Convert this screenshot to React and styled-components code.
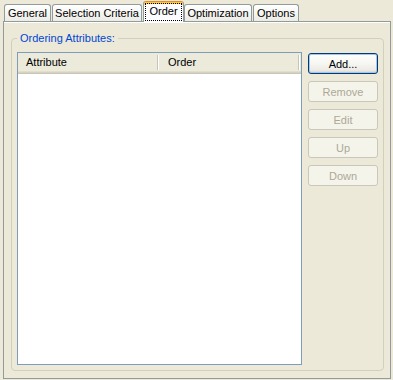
import React from "react";
import styled, { createGlobalStyle } from "styled-components";

const GlobalStyle = createGlobalStyle`
  body {
    margin: 0;
    background: #ece9d8;
    font-family: "Liberation Sans", Arial, sans-serif;
    font-size: 11px;
    color: #000;
  }
`;

const Window = styled.div`
  width: 393px;
  height: 380px;
  box-sizing: border-box;
  padding: 0 2px 1px 3px;
  display: flex;
  flex-direction: column;
`;

const TabStrip = styled.div`
  height: 21px;
  display: flex;
  align-items: flex-end;
  gap: 1px;
  padding-left: 1px;
  position: relative;
  z-index: 1;
`;

const Tab = styled.div`
  width: ${(p) => p.$w}px;
  height: 17px;
  box-sizing: border-box;
  border: 1px solid #919b9c;
  border-bottom: none;
  border-radius: 3px 3px 0 0;
  background: linear-gradient(#ffffff, #f3f3ef 60%, #ecebe6);
  text-align: center;
  line-height: 16px;
  white-space: nowrap;
`;

const ActiveTab = styled.div`
  width: ${(p) => p.$w}px;
  height: 21px;
  margin-bottom: -1px;
  margin-right: -1px;
  box-sizing: border-box;
  border: 1px solid #919b9c;
  border-top: 1px solid #e68b2c;
  border-bottom: none;
  border-radius: 3px 3px 0 0;
  box-shadow: inset 0 2px #ffc83c;
  background: #fcfcfe;
  display: flex;
  justify-content: center;
`;

const FocusLabel = styled.span`
  margin-top: 1px;
  height: 18px;
  box-sizing: border-box;
  padding: 0 3px;
  border: 1px dotted #000;
  line-height: 15px;
`;

const Panel = styled.div`
  flex: 1;
  display: flex;
  border: 1px solid #919b9c;
  box-shadow: inset 0 1px #ffffff;
  padding: 10px 6px 7px 7px;
`;

const Group = styled.fieldset`
  flex: 1;
  min-width: 0;
  margin: 0;
  border: 1px solid #d0d0bf;
  border-radius: 4px;
  padding: 7px 5px 5px 5px;
  display: flex;
  gap: 6px;
`;

const Legend = styled.legend`
  color: #0046d5;
  padding: 0 3px;
  line-height: 13px;
`;

const List = styled.div`
  width: 285px;
  box-sizing: border-box;
  border: 1px solid #7f9db9;
  background: #fff;
  display: flex;
  flex-direction: column;
`;

const Header = styled.div`
  height: 21px;
  display: grid;
  grid-template-columns: 141px 142px;
  background: linear-gradient(
    #ebeadb 0 18px,
    #e2decd 18px 19px,
    #d6d2c2 19px 20px,
    #cbc7b8 20px 21px
  );
`;

const HeaderCell = styled.div`
  position: relative;
  padding-left: ${(p) => p.$pad}px;
  line-height: 18px;

  &::after {
    content: "";
    position: absolute;
    right: ${(p) => p.$edge}px;
    top: 2px;
    height: 15px;
    width: 0;
    border-left: 1px solid #c7c5b2;
    border-right: 1px solid #ffffff;
  }
`;

const ButtonColumn = styled.div`
  display: flex;
  flex-direction: column;
  gap: 7px;
  padding-top: 1px;
`;

const Button = styled.button`
  width: 70px;
  height: 21px;
  padding: 0;
  border-radius: 3px;
  font-family: inherit;
  font-size: 11px;
  border: 1px solid ${(p) => (p.disabled ? "#c9c7ba" : "#003c74")};
  color: ${(p) => (p.disabled ? "#aca899" : "#000")};
  background: ${(p) =>
    p.disabled
      ? "#f5f4ea"
      : "linear-gradient(#ffffff, #f6f6f2 50%, #ecebe6 85%, #d6d0c5)"};
  box-shadow: ${(p) =>
    p.$default ? "inset 0 0 0 1px #a9c3ef" : "none"};
`;

const tabs = [
  { label: "General", w: 47 },
  { label: "Selection Criteria", w: 90 },
  { label: "Order", w: 41, active: true },
  { label: "Optimization", w: 68 },
  { label: "Options", w: 46 },
];

export default function App() {
  return (
    <Window>
      <GlobalStyle />
      <TabStrip>
        {tabs.map((t) =>
          t.active ? (
            <ActiveTab key={t.label} $w={t.w}>
              <FocusLabel>{t.label}</FocusLabel>
            </ActiveTab>
          ) : (
            <Tab key={t.label} $w={t.w}>
              {t.label}
            </Tab>
          )
        )}
      </TabStrip>
      <Panel>
        <Group>
          <Legend>Ordering Attributes:</Legend>
          <List>
            <Header>
              <HeaderCell $pad={8} $edge={0}>Attribute</HeaderCell>
              <HeaderCell $pad={9} $edge={1}>Order</HeaderCell>
            </Header>
          </List>
          <ButtonColumn>
            <Button $default>Add...</Button>
            <Button disabled>Remove</Button>
            <Button disabled>Edit</Button>
            <Button disabled>Up</Button>
            <Button disabled>Down</Button>
          </ButtonColumn>
        </Group>
      </Panel>
    </Window>
  );
}
